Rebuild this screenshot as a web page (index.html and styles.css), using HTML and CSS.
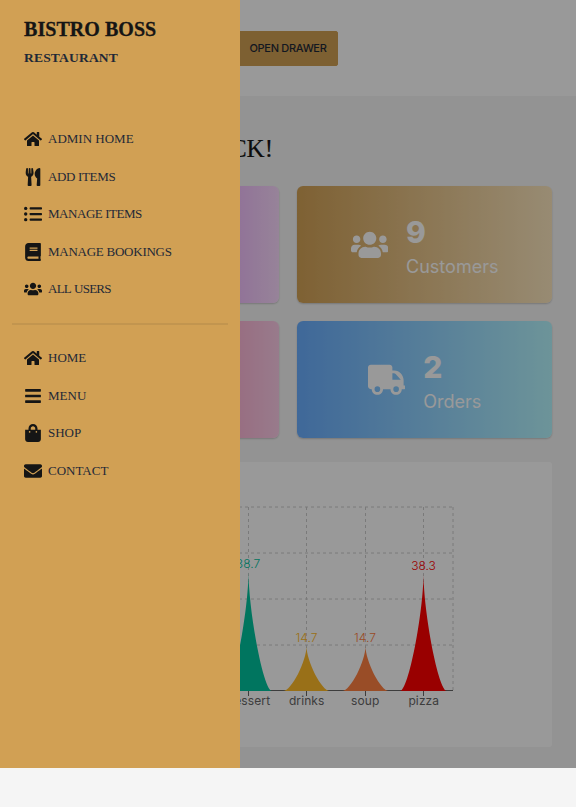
FILE: index.html
```html
<!DOCTYPE html>
<html lang="en">
<head>
<meta charset="utf-8">
<title>Bistro Boss | Dashboard</title>
<link rel="stylesheet" href="styles.css">
</head>
<body>
<svg class="defs" aria-hidden="true">
  <symbol id="home" viewBox="0 0 576 512"><path d="M280.37 148.26L96 300.11V464a16 16 0 0 0 16 16l112.06-.29a16 16 0 0 0 15.92-16V368a16 16 0 0 1 16-16h64a16 16 0 0 1 16 16v95.64a16 16 0 0 0 16 16.05L464 480a16 16 0 0 0 16-16V300L295.67 148.26a12.19 12.19 0 0 0-15.3 0zM571.6 251.47L488 182.56V44.05a12 12 0 0 0-12-12h-56a12 12 0 0 0-12 12v72.61L318.47 43a48 48 0 0 0-61 0L4.34 251.47a12 12 0 0 0-1.6 16.9l25.5 31A12 12 0 0 0 45.15 301l235.22-193.74a12.19 12.19 0 0 1 15.3 0L530.9 301a12 12 0 0 0 16.9-1.6l25.5-31a12 12 0 0 0-1.7-16.93z"/></symbol>
  <symbol id="utensils" viewBox="0 0 416 512"><path d="M207.9 15.2c.8 4.7 16.1 94.5 16.1 128.8 0 52.3-27.8 89.6-68.9 104.6L168 486.7c.7 13.7-10.2 25.3-24 25.3H80c-13.7 0-24.7-11.5-24-25.3l12.9-238.1C27.7 233.6 0 196.2 0 144 0 109.6 15.3 19.9 16.1 15.2 19.3-5.1 61.4-5.4 64 16.3v141.2c1.3 3.4 15.1 3.2 16 0 1.4-25.3 7.9-139.2 8-141.8 3.3-20.8 44.7-20.8 47.9 0 .2 2.7 6.6 116.5 8 141.8.9 3.2 14.8 3.4 16 0V16.3c2.6-21.6 44.8-21.4 48-1.1zm119.2 285.7l-15 185.1c-1.2 14 9.9 26 23.9 26h56c13.3 0 24-10.7 24-24V24c0-13.2-10.7-24-24-24-82.5 0-221.4 178.5-64.9 300.9z"/></symbol>
  <symbol id="list" viewBox="0 0 512 512"><circle cx="48" cy="96" r="48"/><circle cx="48" cy="256" r="48"/><circle cx="48" cy="416" r="48"/><rect x="160" y="64" width="352" height="64" rx="20"/><rect x="160" y="224" width="352" height="64" rx="20"/><rect x="160" y="384" width="352" height="64" rx="20"/></symbol>
  <symbol id="book" viewBox="0 0 448 512"><path d="M448 360V24c0-13.3-10.7-24-24-24H96C43 0 0 43 0 96v320c0 53 43 96 96 96h328c13.3 0 24-10.7 24-24v-16c0-7.5-3.5-14.3-8.9-18.7-4.2-15.4-4.2-59.3 0-74.7 5.4-4.3 8.9-11.1 8.9-18.6zM128 134c0-3.3 2.7-6 6-6h212c3.3 0 6 2.7 6 6v20c0 3.3-2.7 6-6 6H134c-3.3 0-6-2.7-6-6v-20zm0 64c0-3.3 2.7-6 6-6h212c3.3 0 6 2.7 6 6v20c0 3.3-2.7 6-6 6H134c-3.3 0-6-2.7-6-6v-20zm253.4 250H96c-17.7 0-32-14.3-32-32 0-17.6 14.4-32 32-32h285.4c-1.9 17.1-1.9 46.9 0 64z"/></symbol>
  <symbol id="users" viewBox="0 0 640 512"><path d="M96 224c35.3 0 64-28.7 64-64s-28.7-64-64-64-64 28.7-64 64 28.7 64 64 64zm448 0c35.3 0 64-28.7 64-64s-28.7-64-64-64-64 28.7-64 64 28.7 64 64 64zm32 32h-64c-17.6 0-33.5 7.1-45.1 18.6 40.3 22.1 68.9 62 75.1 109.4h66c17.7 0 32-14.3 32-32v-32c0-35.3-28.7-64-64-64zm-256 0c61.9 0 112-50.1 112-112S381.9 32 320 32 208 82.1 208 144s50.1 112 112 112zm76.8 32h-8.3c-20.8 10-43.9 16-68.5 16s-47.6-6-68.5-16h-8.3C179.6 288 128 339.6 128 403.2V432c0 26.5 21.5 48 48 48h288c26.5 0 48-21.5 48-48v-28.8c0-63.6-51.6-115.2-115.2-115.2zm-223.7-13.4C161.5 263.1 145.6 256 128 256H64c-35.3 0-64 28.7-64 64v32c0 17.7 14.3 32 32 32h65.9c6.3-47.4 34.9-87.3 75.2-109.4z"/></symbol>
  <symbol id="bars" viewBox="0 0 448 512"><rect y="60" width="448" height="72" rx="16"/><rect y="220" width="448" height="72" rx="16"/><rect y="380" width="448" height="72" rx="16"/></symbol>
  <symbol id="bag" viewBox="0 0 448 512"><path d="M352 160v-32C352 57.42 294.579 0 224 0 153.42 0 96 57.42 96 128v32H0v272c0 44.183 35.817 80 80 80h288c44.183 0 80-35.817 80-80V160h-96zm-192-32c0-35.29 28.71-64 64-64s64 28.71 64 64v32H160v-32zm160 120c-13.255 0-24-10.745-24-24s10.745-24 24-24 24 10.745 24 24-10.745 24-24 24zm-192 0c-13.255 0-24-10.745-24-24s10.745-24 24-24 24 10.745 24 24-10.745 24-24 24z"/></symbol>
  <symbol id="mail" viewBox="0 0 512 512"><path d="M502.3 190.8c3.9-3.1 9.7-.2 9.7 4.7V400c0 26.5-21.5 48-48 48H48c-26.5 0-48-21.5-48-48V195.6c0-5 5.7-7.8 9.7-4.7 22.4 17.4 52.1 39.5 154.1 113.6 21.1 15.4 56.7 47.8 92.2 47.6 35.7.3 72-32.8 92.3-47.6 102-74.1 131.6-96.3 154-113.7zM256 320c23.2.4 56.6-29.2 73.4-41.4 132.7-96.3 142.8-104.7 173.4-128.7 5.8-4.5 9.2-11.5 9.2-18.9v-19c0-26.5-21.5-48-48-48H48c-26.5 0-48 21.5-48 48v19c0 7.4 3.4 14.3 9.2 18.9 30.6 23.9 40.7 32.4 173.4 128.7 16.8 12.2 50.2 41.8 73.4 41.4z"/></symbol>
  <symbol id="truck" viewBox="0 0 640 512"><path fill-rule="evenodd" d="M48 0H368c26 0 48 22 48 48V96h32c90 0 160 80 160 170V352h16c9 0 16 7 16 16v32c0 9-7 16-16 16H576c0 53-43 96-96 96s-96-43-96-96H256c0 53-43 96-96 96s-96-43-96-96H48c-26 0-48-22-48-48V48C0 22 22 0 48 0zM416 144V256H560L472 158Q460 144 442 144zM160 368a48 48 0 1 0 0 96 48 48 0 0 0 0-96zM480 368a48 48 0 1 0 0 96 48 48 0 0 0 0-96z"/></symbol>
</svg>

<div class="page">
  <header class="topbar"><button class="open">OPEN DRAWER</button></header>
  <main class="main">
    <h1 class="title">BACK!</h1>
    <section class="cards">
      <div class="card revenue"></div>
      <div class="card customers">
        <svg class="card-icon users"><use href="#users"/></svg>
        <div><div class="value">9</div><div class="label">Customers</div></div>
      </div>
      <div class="card products"></div>
      <div class="card orders">
        <svg class="card-icon"><use href="#truck"/></svg>
        <div><div class="value">2</div><div class="label">Orders</div></div>
      </div>
    </section>
    <section class="panel">
      <svg class="chart" viewBox="0 0 528 285">
        <g class="grid">
          <path d="M137 45H429M137 91H429M137 137H429M137 183H429"/>
          <path d="M166 45V229M224.5 45V229M282.5 45V229M341.5 45V229M399.5 45V229M429 45V229"/>
        </g>
        <path class="axis" d="M137 228.5H429M166 229v5M224.5 229v5M282.5 229v5M341.5 229v5M399.5 229v5"/>
        <path class="dessert" d="M201.1 229C209.5 229 224.5 149.3 224.5 109.5C224.5 149.3 239.5 229 247.9 229Z"/>
        <path class="drinks" d="M259.1 229C267.5 229 282.5 199 282.5 184C282.5 199 297.5 229 305.9 229Z"/>
        <path class="soup" d="M318.1 229C326.5 229 341.5 199 341.5 184C341.5 199 356.5 229 364.9 229Z"/>
        <path class="pizza" d="M376.1 229C384.5 229 399.5 150.5 399.5 111.2C399.5 150.5 414.5 229 422.9 229Z"/>
        <g class="values">
          <text class="dessert" x="224" y="106">38.7</text>
          <text class="drinks" x="282.5" y="180">14.7</text>
          <text class="soup" x="341" y="180">14.7</text>
          <text class="pizza" x="399.5" y="108">38.3</text>
        </g>
        <g class="names">
          <text x="224.5" y="243">dessert</text>
          <text x="282.7" y="243">drinks</text>
          <text x="341.3" y="243">soup</text>
          <text x="399.8" y="243">pizza</text>
        </g>
      </svg>
    </section>
  </main>
</div>

<div class="overlay">
  <aside class="drawer">
    <div class="brand">BISTRO BOSS</div>
    <div class="sub">RESTAURANT</div>
    <nav class="menu">
      <a><svg><use href="#home"/></svg>ADMIN HOME</a>
      <a class="t2"><svg><use href="#utensils"/></svg>ADD ITEMS</a>
      <a class="t3"><svg><use href="#list"/></svg>MANAGE ITEMS</a>
      <a class="t1"><svg><use href="#book"/></svg>MANAGE BOOKINGS</a>
      <a class="t4"><svg><use href="#users"/></svg>ALL USERS</a>
    </nav>
    <div class="divider"></div>
    <nav class="menu second">
      <a><svg><use href="#home"/></svg>HOME</a>
      <a><svg><use href="#bars"/></svg>MENU</a>
      <a><svg><use href="#bag"/></svg>SHOP</a>
      <a><svg><use href="#mail"/></svg>CONTACT</a>
    </nav>
  </aside>
</div>
</body>
</html>
```
FILE: styles.css
```css
* { box-sizing: border-box; }
body { margin: 0; height: 807px; overflow: hidden; background: #f5f5f5; font-family: Inter, sans-serif; }
.defs { display: none; }
.page { height: 768px; background: #f6f6f6; }
.topbar { height: 96px; background: #fff; display: flex; align-items: center; justify-content: center; }
.open {
  width: 100px; height: 35px; padding: 0; border: 1px solid #d1a054; border-radius: 2px;
  background: #d1a054; color: #1f2937; font: 500 11px Inter, sans-serif; letter-spacing: -.3px; white-space: nowrap;
}
.main { padding: 36px 24px 0; }
.title {
  margin: 0; width: 249px; height: 54px; text-align: right;
  font: 400 25px/34px "Liberation Serif", serif; color: #151515; white-space: nowrap;
  -webkit-text-stroke: .2px #151515;
}
.cards { display: grid; grid-template-columns: 1fr 1fr; grid-auto-rows: 117px; gap: 18px; }
.card {
  display: flex; align-items: center; justify-content: center; gap: 18px;
  border-radius: 6px; color: #fff; box-shadow: 0 1px 2px rgba(0,0,0,.2);
}
.revenue { background: linear-gradient(90deg, #bb34f5, #fcdbff); }
.customers { background: linear-gradient(90deg, #d3a256, #fde8c0); }
.products { background: linear-gradient(90deg, #fe4880, #fecde9); }
.orders { background: linear-gradient(90deg, #6aaeff, #b6f7ff); }
.card-icon { width: 37.5px; height: 37.5px; fill: currentColor; }
.value { font-size: 30px; line-height: 36px; font-weight: 800; margin-top: 8px; }
.label { font-size: 18px; line-height: 33px; }
.panel { height: 285px; margin-top: 24px; background: #fff; border-radius: 3px; }
.chart { display: block; width: 528px; height: 285px; font: 12px Inter, sans-serif; text-anchor: middle; }
.grid { fill: none; stroke: #ccc; stroke-dasharray: 3 3; }
.axis { fill: none; stroke: #666; }
.values { font-weight: 300; }
.names { fill: #666; letter-spacing: .1px; }
.dessert { fill: #00c49f; }
.drinks { fill: #ffbb28; }
.soup { fill: #ff8042; }
.pizza { fill: #f00; }
.overlay { position: absolute; top: 0; left: 0; width: 576px; height: 768px; background: rgba(0,0,0,.4); }
.drawer {
  width: 240px; height: 768px; padding: 18px 12px 0; background: #d1a054;
  color: #151515; font-family: "Liberation Serif", serif;
}
.brand { padding-left: 12px; font-size: 20px; font-weight: 700; line-height: 22px; letter-spacing: .05px; -webkit-text-stroke: .3px #151515; }
.sub { padding-left: 12px; margin-top: 8px; font-size: 13.5px; font-weight: 700; line-height: 20px; letter-spacing: .2px; color: #1f2937; }
.menu { margin-top: 52.5px; padding-left: 12px; }
.menu a { height: 37.5px; display: flex; align-items: center; gap: 6px; font-size: 13px; line-height: 18px; color: #1f2937; }
.menu svg { width: 18px; height: 18px; fill: #151515; }
.t1 { letter-spacing: -.25px; }
.t2 { letter-spacing: -.35px; }
.t3 { letter-spacing: -.45px; }
.t4 { letter-spacing: -.75px; word-spacing: 1px; }
.divider { height: 2px; margin-top: 14.5px; background: #c2954f; }
.second { margin-top: 15px; }
```
